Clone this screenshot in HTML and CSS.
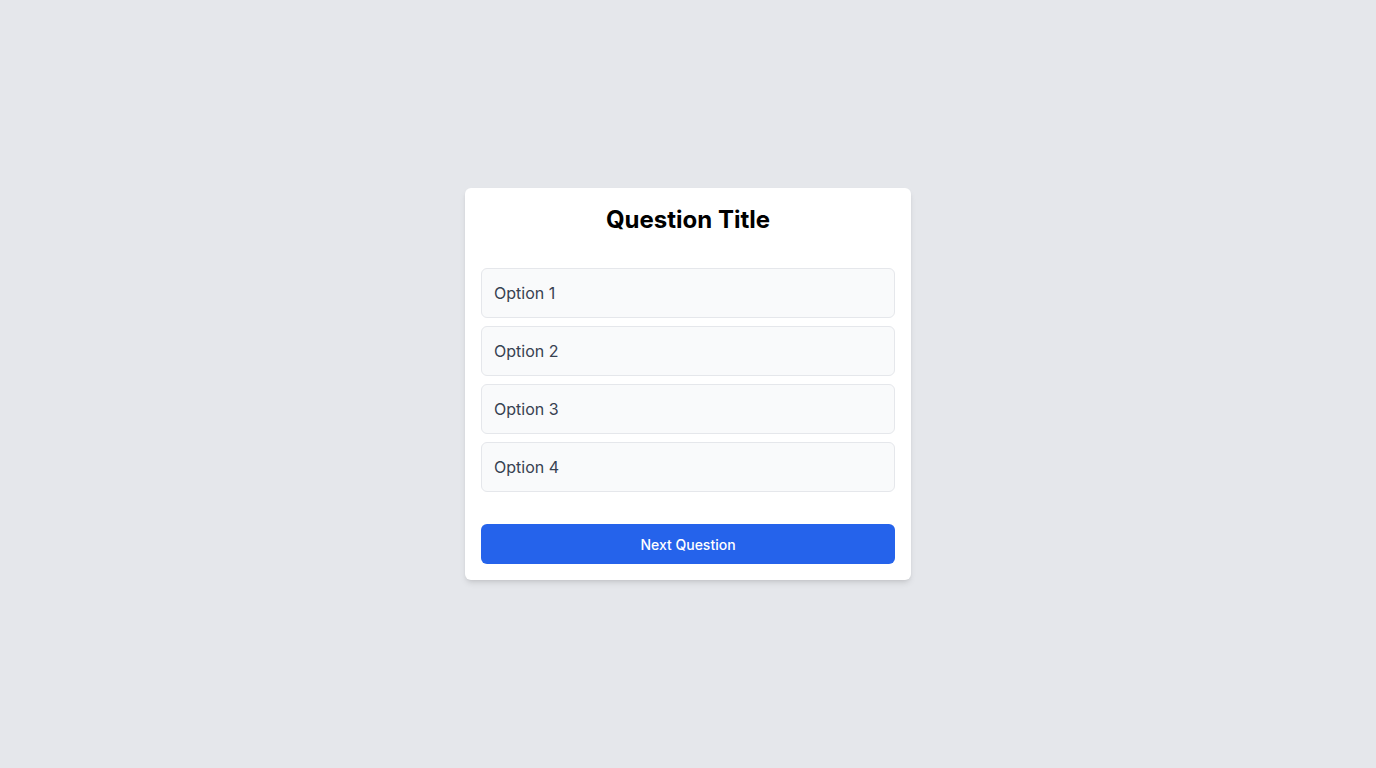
FILE: index.html
```
<!DOCTYPE html>
<html lang="en">
<head>
<meta charset="utf-8">
<title>Quiz</title>
<link rel="stylesheet" href="styles.css">
</head>
<body>
<main class="page">
  <section class="card">
    <h1 class="title">Question Title</h1>
    <div class="options">
      <button class="option">Option 1</button>
      <button class="option">Option 2</button>
      <button class="option">Option 3</button>
      <button class="option">Option 4</button>
    </div>
    <button class="next">Next Question</button>
  </section>
</main>
</body>
</html>
```
FILE: styles.css
```
* { box-sizing: border-box; }
html, body { margin: 0; padding: 0; }
body {
  background: #e5e7eb;
  font-family: Inter, "Noto Sans", sans-serif;
}
.page {
  min-height: 768px;
  display: flex;
  align-items: center;
  justify-content: center;
}
.card {
  width: 446px;
  background: #ffffff;
  border-radius: 6px;
  padding: 16px;
  box-shadow: 0 4px 6px -1px rgba(0,0,0,0.1), 0 2px 4px -2px rgba(0,0,0,0.1);
  display: flex;
  flex-direction: column;
}
.title {
  margin: 0 0 32px;
  font-size: 24px;
  line-height: 32px;
  font-weight: 700;
  text-align: center;
  color: #000;
}
.options {
  display: flex;
  flex-direction: column;
  gap: 8px;
  margin-bottom: 32px;
}
.option {
  display: block;
  width: 100%;
  text-align: left;
  font-family: inherit;
  font-size: 16px;
  line-height: 24px;
  color: #374151;
  background: #f9fafb;
  border: 1px solid #e5e7eb;
  border-radius: 6px;
  padding: 12px;
}
.next {
  height: 40px;
  width: 100%;
  border: none;
  border-radius: 6px;
  background: #2563eb;
  color: #ffffff;
  font-family: inherit;
  font-size: 14px;
  font-weight: 500;
}
```
